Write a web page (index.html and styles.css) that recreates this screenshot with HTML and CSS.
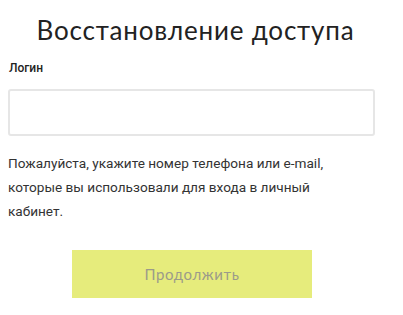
FILE: index.html
```html
<!DOCTYPE html>
<html lang="ru">
<head>
  <meta charset="UTF-8" />
  <title>Восстановление доступа</title>
  <link rel="stylesheet" href="styles.css">
</head>
<body>
  <div class="restore">
    <h1 class="restore-title">Восстановление доступа</h1>
    <label class="restore-label" for="login">Логин</label>
    <input type="text" id="login" class="restore-input" />
    <p class="restore-hint">Пожалуйста, укажите номер телефона или e-mail, которые вы использовали для входа в личный кабинет.</p>
    <div class="restore-actions">
      <button class="restore-button">Продолжить</button>
    </div>
  </div>
</body>
</html>
```

FILE: styles.css
```css
* {
  box-sizing: border-box;
  margin: 0;
  padding: 0;
}

body {
  font-family: Roboto, "Liberation Sans", sans-serif;
  background-color: #fff;
  color: #222;
}

.restore {
  width: 403px;
  padding: 0 28px 0 8px;
}

.restore-title {
  font-family: Lato, "Open Sans", sans-serif;
  font-weight: 400;
  font-size: 26px;
  letter-spacing: 0.8px;
  text-align: center;
  color: #222;
  margin: 15px 0 0 8px;
  line-height: 30px;
}

.restore-label {
  display: block;
  font-size: 12px;
  font-weight: 500;
  margin: 16px 0 0 1px;
  line-height: 14px;
}

.restore-input {
  display: block;
  width: 367px;
  height: 47px;
  margin-top: 14px;
  border: 2px solid #e6e6e6;
  border-radius: 3px;
  background: #fff;
  font-size: 14px;
}

.restore-hint {
  font-size: 13.6px;
  line-height: 24px;
  color: #333;
  margin-top: 15px;
  width: 340px;
}

.restore-actions {
  display: flex;
  margin-top: 27px;
  padding-left: 64px;
}

.restore-button {
  width: 240px;
  height: 48px;
  border: none;
  background-color: #e6ec7c;
  color: #9b9b8a;
  font-family: Lato, "Open Sans", sans-serif;
  font-size: 15px;
  letter-spacing: 0.6px;
}
```
